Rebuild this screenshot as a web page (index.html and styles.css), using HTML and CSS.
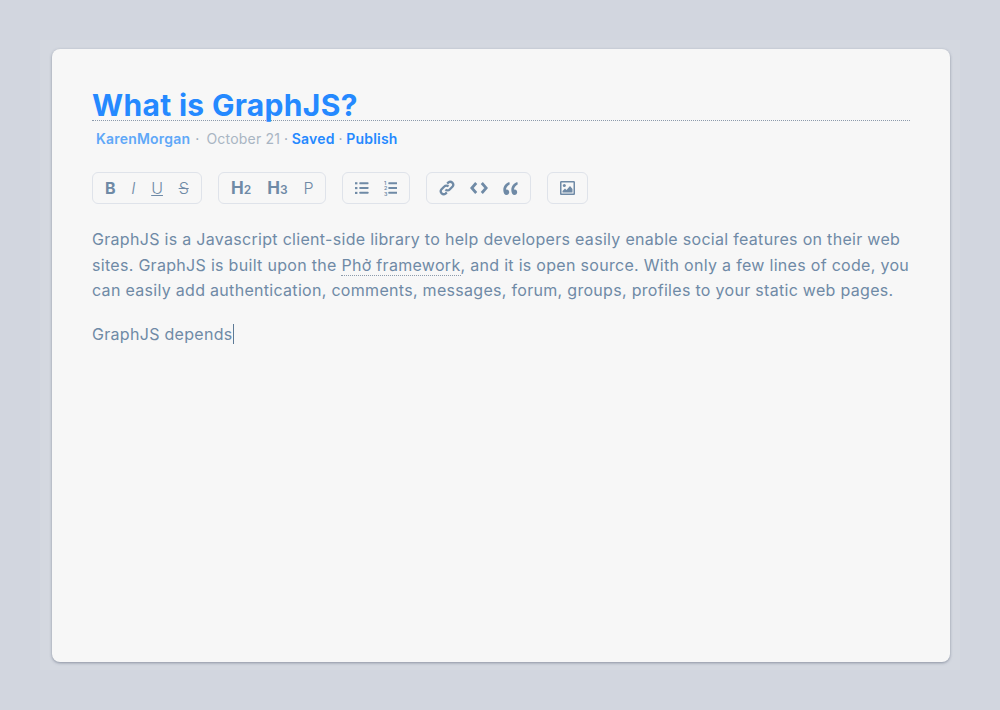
FILE: index.html
```html
<!DOCTYPE html>
<html lang="en">
<head>
    <meta charset="UTF-8">
    <title>What is GraphJS?</title>
    <link rel="stylesheet" href="styles.css">
</head>
<body>
    <div class="frame">
        <div class="editor">
            <h1 class="title">What is GraphJS?</h1>
            <div class="meta">
                <span class="author">KarenMorgan</span>
                <span class="sep first">·</span>
                <span class="date">October 21</span>
                <span class="sep">·</span>
                <span class="action">Saved</span>
                <span class="sep">·</span>
                <span class="action">Publish</span>
            </div>

            <div class="toolbar">
                <div class="group group-format">
                    <span class="tool bold">B</span>
                    <span class="tool italic">I</span>
                    <span class="tool underline">U</span>
                    <span class="tool strike">S</span>
                </div>
                <div class="group group-heading">
                    <span class="tool heading">H<small>2</small></span>
                    <span class="tool heading">H<small>3</small></span>
                    <span class="tool para">P</span>
                </div>
                <div class="group group-list">
                    <svg class="icon" width="14" height="14" viewBox="0 0 14 14">
                        <rect x="0" y="1" width="2.5" height="2.200"/><rect x="0" y="6" width="2.500" height="2.200"/><rect x="0" y="11" width="2.500" height="2.200"/>
                        <rect x="4.500" y="1" width="9.500" height="2" rx=".5"/><rect x="4.500" y="6" width="9.500" height="2" rx=".5"/><rect x="4.500" y="11" width="9.500" height="2" rx=".5"/>
                    </svg>
                    <svg class="icon" width="14" height="16" viewBox="0 0 14 16">
                        <text class="digit" x="0" y="5">1</text>
                        <text class="digit" x="0" y="10.500">2</text>
                        <text class="digit" x="0" y="16">3</text>
                        <rect x="4.500" y="2" width="9.500" height="2" rx=".5"/><rect x="4.500" y="7" width="9.500" height="2" rx=".5"/><rect x="4.500" y="12" width="9.500" height="2" rx=".5"/>
                    </svg>
                </div>
                <div class="group group-insert">
                    <svg class="icon" width="16" height="16" viewBox="0 0 16 16">
                        <path class="line" d="M6.500 9.500a2.900 2.900 0 0 0 4.200 0l2.900-2.900a3 3 0 0 0-4.200-4.200L8.200 3.600"/>
                        <path class="line" d="M9.500 6.500a2.900 2.900 0 0 0-4.200 0L2.400 9.400a3 3 0 0 0 4.200 4.200l1.200-1.200"/>
                    </svg>
                    <svg class="icon" width="18" height="12" viewBox="0 0 18 12">
                        <path class="line chevron" d="M6.200 1 1.800 6l4.400 5M11.800 1l4.400 5-4.400 5"/>
                    </svg>
                    <svg class="icon" width="15" height="13" viewBox="0 0 15 13">
                        <path d="M6.300 0C2.800 1.400.3 4 .3 8c0 3 1.400 5 3.200 5 1.500 0 2.700-1.200 2.700-2.700 0-1.500-1-2.700-2.400-2.700-.4 0-.7.100-.9.200C3.100 5.700 4.400 3.600 6.800 2.200z"/>
                        <path d="M14.300 0c-3.500 1.400-6 4-6 8 0 3 1.400 5 3.200 5 1.500 0 2.700-1.200 2.700-2.700 0-1.500-1-2.700-2.400-2.700-.4 0-.7.100-.9.200.2-2.100 1.500-4.200 3.900-5.600z"/>
                    </svg>
                </div>
                <div class="group group-image">
                    <svg class="icon" width="15" height="14" viewBox="0 0 15 14">
                        <path fill-rule="evenodd" d="M1.300 0h12.400c.7 0 1.300.6 1.300 1.300v11.400c0 .7-.6 1.300-1.300 1.300H1.300C.6 14 0 13.400 0 12.700V1.300C0 .6.600 0 1.300 0zM1.500 1.500v11h12v-11z"/>
                        <circle cx="4.300" cy="4.500" r="1.500"/>
                        <path d="M2.500 11.500V10l2.500-2.400 1.500 1.500 3.500-4.200 2.500 3v3.600z"/>
                    </svg>
                </div>
            </div>

            <div class="content">
                <p>GraphJS is a Javascript client-side library to help developers easily enable social features on their web sites. GraphJS is built upon the <a class="link">Phở framework</a>, and it is open source. With only a few lines of code, you can easily add authentication, comments, messages, forum, groups, profiles to your static web pages.</p>
                <p><span class="caret">GraphJS depends</span></p>
            </div>
        </div>
    </div>
</body>
</html>
```

FILE: styles.css
```css
* {
    box-sizing: border-box;
}

body {
    margin: 0;
    padding: 40px;
    background: #d2d6df;
    font-family: Inter, "Noto Sans", sans-serif;
    overflow: hidden;
}

.frame {
    height: 630px;
    padding: 9px 10px 8px 12px;
    background: #d4d8e0;
}

.editor {
    height: 613px;
    padding: 38px 40px 0;
    background: #f7f7f7;
    border-radius: 8px;
    box-shadow: 0 1px 3px rgba(90, 100, 120, 0.6);
}

.title {
    margin: 0;
    height: 34px;
    font-size: 30px;
    line-height: 36px;
    font-weight: 700;
    letter-spacing: 0.32px;
    color: #2589ff;
    border-bottom: 1px dotted #8c9aab;
}

.meta {
    display: flex;
    margin-top: 8px;
    padding-left: 4px;
    font-size: 14px;
    line-height: 20px;
    letter-spacing: 0.2px;
    color: #a9b5c3;
}

.author {
    font-weight: 600;
    color: #5fa8f8;
}

.sep {
    margin: 0 3.700px;
    color: #8fa0b3;
}

.sep.first {
    margin: 0 7px 0 5px;
}

.action {
    font-weight: 600;
    color: #2589ff;
}

.toolbar {
    display: flex;
    gap: 16px;
    margin-top: 23px;
}

.group {
    display: flex;
    align-items: center;
    height: 32px;
    border: 1px solid #dfe3ea;
    border-radius: 6px;
    color: #6f8aa6;
    padding: 0 12px;
}

.group-format { width: 110px; gap: 15.700px; }
.group-heading { width: 108px; gap: 16px; }
.group-list { width: 68px; gap: 15px; }
.group-insert { width: 105px; gap: 15px; }
.group-image { width: 41px; }

.tool {
    font-size: 16px;
    line-height: 20px;
}

.bold { font-weight: 700; }
.italic { font-style: italic; font-weight: 300; }
.underline { font-weight: 300; text-decoration: underline; }
.strike { font-weight: 300; text-decoration: line-through; }

.heading {
    padding-top: 1px;
    font-size: 17px;
    font-weight: 700;
}

.heading small {
    font-size: 12px;
    font-weight: 600;
}

.para {
    font-weight: 300;
}

.icon {
    fill: #6f8aa6;
}

.digit {
    font-size: 5.500px;
    font-weight: 600;
}

.line {
    fill: none;
    stroke: #6f8aa6;
    stroke-width: 2.300;
}

.chevron {
    stroke-width: 2.800;
}

.content {
    margin-top: 23px;
    font-size: 16px;
    line-height: 25.600px;
    letter-spacing: 0.3px;
    color: #6f8aa6;
}

.content p {
    margin: 0 0 18px;
}

.link {
    border-bottom: 1px dotted #8c9aab;
}

.caret {
    border-right: 1px solid #5d7a96;
}
```
